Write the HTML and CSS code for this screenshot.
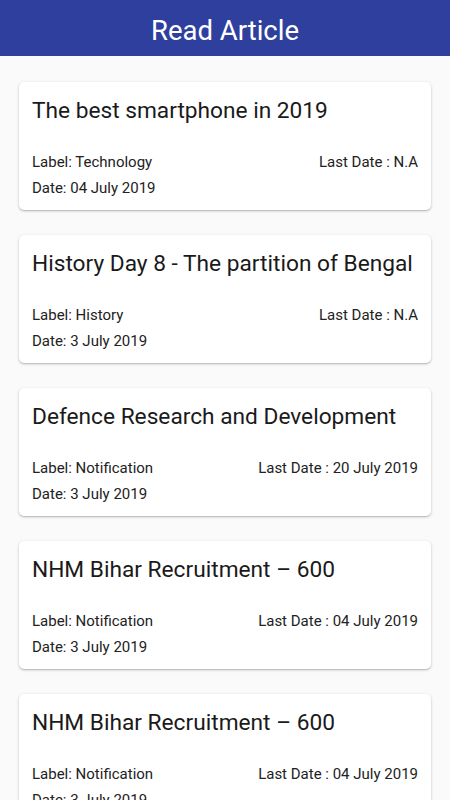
FILE: index.html
```html
<!DOCTYPE html>
<html>
<head>
<meta charset="utf-8">
<link rel="stylesheet" href="styles.css">
</head>
<body>
<header class="appbar">Read Article</header>
<main class="list">
  <div class="card">
    <div class="title">The best smartphone in 2019</div>
    <div class="row"><span>Label: Technology</span><span>Last Date : N.A</span></div>
    <div class="row"><span>Date: 04 July 2019</span></div>
  </div>
  <div class="card">
    <div class="title">History Day 8 - The partition of Bengal</div>
    <div class="row"><span>Label: History</span><span>Last Date : N.A</span></div>
    <div class="row"><span>Date: 3 July 2019</span></div>
  </div>
  <div class="card">
    <div class="title">Defence Research and Development</div>
    <div class="row"><span>Label: Notification</span><span>Last Date : 20 July 2019</span></div>
    <div class="row"><span>Date: 3 July 2019</span></div>
  </div>
  <div class="card">
    <div class="title">NHM Bihar Recruitment – 600</div>
    <div class="row"><span>Label: Notification</span><span>Last Date : 04 July 2019</span></div>
    <div class="row"><span>Date: 3 July 2019</span></div>
  </div>
  <div class="card">
    <div class="title">NHM Bihar Recruitment – 600</div>
    <div class="row"><span>Label: Notification</span><span>Last Date : 04 July 2019</span></div>
    <div class="row"><span>Date: 3 July 2019</span></div>
  </div>
</main>
</body>
</html>
```
FILE: styles.css
```css
html, body {
  margin: 0;
  padding: 0;
  background: #fafafa;
  font-family: Roboto, "Noto Sans", sans-serif;
  overflow: hidden;
}
.appbar {
  height: 56px;
  background: #2f3f9e;
  color: #fff;
  font-size: 27.5px;
  display: flex;
  align-items: center;
  justify-content: center;
  padding-top: 4px;
  box-sizing: border-box;
}
.list {
  display: flex;
  flex-direction: column;
  gap: 25px;
  padding: 26px 19px;
}
.card {
  background: #fff;
  border-radius: 5px;
  box-shadow: 0 1px 3px rgba(0,0,0,0.22), 0 1px 1px rgba(0,0,0,0.1);
  padding: 14px 13px 10px;
  height: 128px;
  box-sizing: border-box;
  flex-shrink: 0;
}
.title {
  font-size: 22.7px;
  line-height: 30px;
  color: #1a1a1a;
  margin-bottom: 23px;
  white-space: nowrap;
}
.row {
  display: flex;
  justify-content: space-between;
  font-size: 15px;
  line-height: 26px;
  color: #222;
}
```
